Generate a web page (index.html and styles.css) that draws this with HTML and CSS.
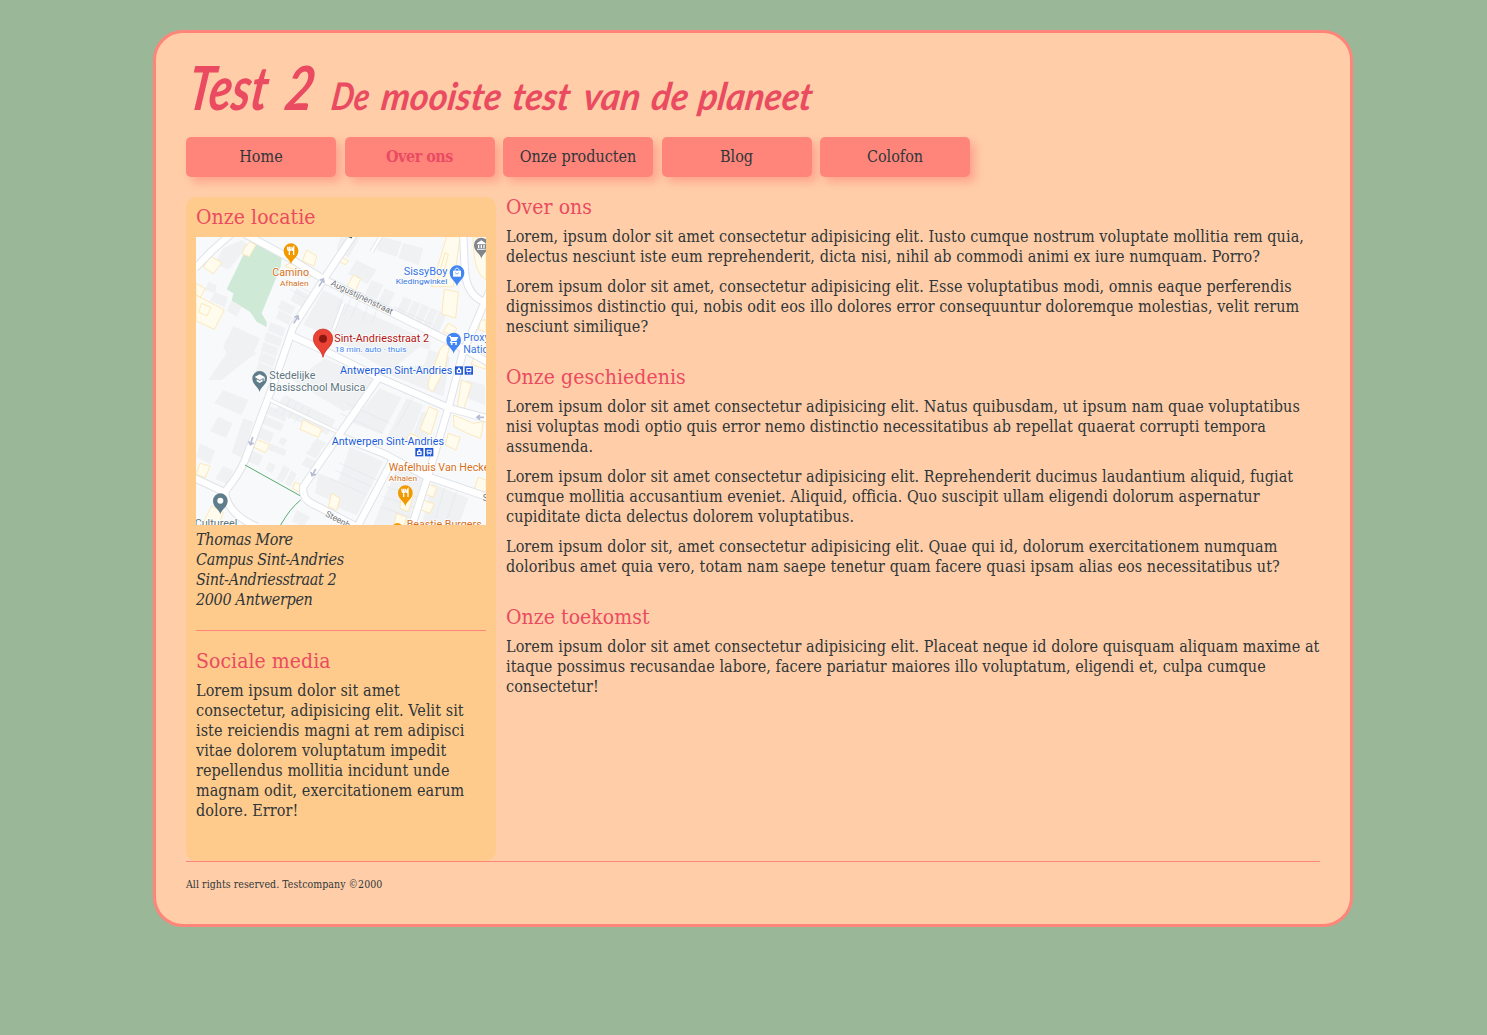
FILE: index.html
```
<!DOCTYPE html>
<html lang="nl">
<head>
<meta charset="utf-8">
<title>Test 2 - Over ons</title>
<link rel="stylesheet" href="styles.css">
</head>
<body>
<div class="page">
  <header>
    <svg class="brand" viewBox="0 0 640 74" role="img" aria-label="Test 2 De mooiste test van de planeet">
      <g transform="translate(0 50) skewX(-8)">
        <text class="brand-name"><tspan x="0" textLength="80" lengthAdjust="spacingAndGlyphs">Test</tspan></text>
        <text class="brand-name"><tspan x="97" textLength="29" lengthAdjust="spacingAndGlyphs">2</tspan></text>
        <text class="brand-sub" x="144" textLength="38" lengthAdjust="spacingAndGlyphs">De</text>
        <text class="brand-sub" x="194" textLength="120" lengthAdjust="spacingAndGlyphs">mooiste</text>
        <text class="brand-sub" x="325" textLength="58" lengthAdjust="spacingAndGlyphs">test</text>
        <text class="brand-sub" x="396" textLength="57" lengthAdjust="spacingAndGlyphs">van</text>
        <text class="brand-sub" x="464" textLength="37" lengthAdjust="spacingAndGlyphs">de</text>
        <text class="brand-sub" x="511" textLength="114" lengthAdjust="spacingAndGlyphs">planeet</text>
      </g>
    </svg>
    <nav class="menu">
      <a>Home</a><a class="active">Over ons</a><a>Onze producten</a><a>Blog</a><a>Colofon</a>
    </nav>
  </header>
  <div class="columns">
    <aside>
      <h2>Onze locatie</h2>
      <svg class="map" viewBox="18 21 870 864">
        <rect x="18" y="21" width="870" height="864" fill="#f8f9fb"/>
        <path class="park" d="M190 38L275 85L272 110L215 250L230 275V292L200 275L180 245L125 212L130 190L110 178L160 75Z"/>
        <g class="block">
          <path d="M75 100l25-45l55-25l20 15l-60 75zM55 155l25 10l-5 25l-30-10zM75 187l38 15l-8 30l-45-20zM125 212l30 18l-15 30l-30-18z"/>
          <path d="M130 288l80 38l-20 45l-80-40zM110 325l90 45l-30 20l-75 60h-40l55-80l-10-20z"/>
          <path d="M275 210l40 22l-12 24l-40-22zM268 240l38 20l-10 25l-38-20zM240 276l45 18l-6 26l-45-18zM228 306l48 18l-6 26l-48-18zM220 336l45 18l-8 26l-45-18zM213 366l45 18l-8 26l-45-18zM205 396l45 18l-8 30l-45-18z"/>
          <path d="M320 175l45 25l-22 34l-42-22zM400 180l60 30l-30 110l-90-35zM440 60l10-38h60l-35 60zM500 90l60 30l-28 42l-58-30zM575 20l60 15l-15 45l-60-20zM640 40l60 15l-15 50l-60-20z"/>
          <path d="M545 150l35 15l-20 42l-35-15zM585 175l30 13l-20 40l-30-13zM640 200l26 10l-25 55l-26-10zM670 212l22 9l-25 56l-22-9zM696 222l22 9l-25 56l-22-9zM722 233l22 9l-25 56l-22-9zM748 243l22 9l-25 56l-22-9z"/>
          <path d="M470 220l255 115l-22 70l-120 10l-160-90zM405 385l150 68l-35 80l-60 10l-150-90zM590 430l170 70l20-120l-90-30z"/>
          <path d="M100 480l75 30l-20 45l-82-35zM85 560l43 20l-20 44l-48-20zM160 565l30 10l-35 108l-30-15zM30 640l45 22l-15 40l-42-22zM100 708l30 15l-20 38l-35-15z"/>
          <path d="M232 525l60 28l-8 22l-60-26zM222 556l60 26l-10 22l-58-24zM212 592l40 18l-12 28l-38-14zM275 620l18 10l-12 18l-16-10zM240 640l50 20l-6 18l-50-18zM185 660l34 18l-14 30l-30-14zM237 696l20 10l-12 24l-18-10zM280 706l20 10l-22 42l-18-10zM304 722l16 10l-18 38l-18-10z"/>
          <path d="M260 545l26-50l150 75l-24 45zM380 625l30 15l-20 22l-28-14zM365 650l28 14l-16 22l-30-16zM350 680l28 14l-16 24l-28-14zM320 840l40 20l-20 30l-35-15zM385 730l75 30l-20 60l-65-30z"/>
          <path d="M570 475l65 28l-60 110l-90-35zM650 505l50 20l-50 120l-60-22zM740 555l-35 85l-40-15l30-80zM480 650l100 45l-80 160l-80-30zM620 715l80 30l-50 140h-100zM725 760l110 45l-30 80h-110zM820 500l65 25v-60l-55-15z"/>
        </g>
        <g class="seams">
          <path d="M310 160l50 28M300 178l45 24M475 165l-35 75M495 180l-35 75M518 188l-35 75M545 200l-30 75M570 210l-24 70M610 230l120 55"/>
          <path d="M280 500l-25 50M300 508l-25 50M320 518l-25 50M340 528l-25 50M360 538l-25 50M470 520l130 60M450 550l130 60M620 590l50-90M450 700l110 50M435 720l110 50M420 745l110 50M590 770l100 35M580 800l100 35M570 830l100 35M765 770l-35 115M800 785l-35 100"/>
        </g>
        <g class="shop">
          <path d="M60 78l35 20l-25 33l-30-20zM180 35l18 10l-20 35l-22-8l7-18zM18 195l85 45l-30 58l-55-26zM35 220l28 12l-12 26l-25-12zM18 160l28 16l-15 25l-13-6zM310 95l70 35l-20 12l-75-35zM350 60l30 18l-8 30l-35-15z"/>
          <path d="M770 20h40l-20 150h-65zM765 68l10 5l-20 80l-12-5zM763 178l42 8l-8 78l-42-12zM775 280l25 14l-8 25l-32-14zM750 360q12-25 28-10l-15 70l-35 65q-25-10-5-50zM850 20q15 0 38 20v110q-35-20-38-100zM870 270h18v35l-22-6z"/>
          <path d="M490 135l22 12l-16 35l-25-12zM450 80l25 12l-8 12l-17-8zM340 570l55 28l-10 24l-55-24zM200 628l38 16l-12 24l-35-16zM315 756l22 10l-8 20l-22-10zM30 700l30 8l-14 35l-28-10zM65 828l35 20l-15 38h-50zM425 790l25 15l-10 35l-25-10z"/>
          <path d="M850 385l38 15v18l-45-15zM815 450l30 12l-25 78l-18-10zM790 555l60 25l30-5l-8 50l-40-15l-40-20zM775 610l35 12l-12 38l-32-15zM717 530l27 12l-22 72l-32-16zM660 610l25 10l-8 20l-28-12zM708 760l32 12l-10 30l-30-12zM700 810l32 12l-12 28l-30-12zM635 780l35 15l-15 50l-25-10zM620 850l30 12l-8 24h-30zM865 742l23 8v40l-35-12z"/>
        </g>
        <g class="roads-edge">
          <path d="M15 115L65 63L125 10M165 12L300 85L405 150L610 250L790 340L900 400M490 15L400 150L310 290L255 450L165 690Q150 730 105 785Q110 850 200 890M300 315L420 370L560 440L780 535L890 565"/>
          <path d="M820 20L824 110Q825 190 880 215M900 180L818 370L775 535L715 735L665 890M565 445L450 610L340 770Q335 805 365 820L500 890M450 620L580 670L700 735L890 800M605 695L505 885M15 745L105 787"/>
        </g>
        <g class="roads">
          <path d="M15 115L65 63L125 10M165 12L300 85L405 150L610 250L790 340L900 400M490 15L400 150L310 290L255 450L165 690Q150 730 105 785Q110 850 200 890M300 315L420 370L560 440L780 535L890 565"/>
          <path d="M820 20L824 110Q825 190 880 215M900 180L818 370L775 535L715 735L665 890M565 445L450 610L340 770Q335 805 365 820L500 890M450 620L580 670L700 735L890 800M605 695L505 885M15 745L105 787"/>
        </g>
        <path class="lane-edge" d="M240 510L440 605M572 20L545 65M460 220L430 300"/>
        <path class="lane" d="M240 510L440 605M572 20L545 65M460 220L430 300"/>
        <path class="trail" d="M165 705L330 797M332 810Q300 835 272 885"/>
        <g class="arrows">
          <path d="M387 169L399 150M389 151L400 147L402 159M311 280L323 261M313 262L324 258L326 270M188 621L182 642M176 634L181 644L191 639M377 717L367 736M363 726L366 737L378 733M882 562H862M870 555L861 562L870 569"/>
        </g>
        <g>
          <g transform="translate(303 62)"><path fill="#f29900" d="M0 41C-3 25-22 20-22 0A22 22 0 1 1 22 0C22 20 3 25 0 41Z"/><path class="glyph" d="M-10-12V-5Q-10 0-5 0Q0 0 0-5V-12M-5-12V13M8 13V-12Q4-9 4-1H8"/></g>
          <g transform="translate(646 788)"><path fill="#f29900" d="M0 41C-3 25-22 20-22 0A22 22 0 1 1 22 0C22 20 3 25 0 41Z"/><path class="glyph" d="M-10-12V-5Q-10 0-5 0Q0 0 0-5V-12M-5-12V13M8 13V-12Q4-9 4-1H8"/></g>
          <g transform="translate(801 128)"><path fill="#4285f4" d="M0 41C-3 25-22 20-22 0A22 22 0 1 1 22 0C22 20 3 25 0 41Z"/><path fill="#fff" d="M-12-6H12V12H-12Z"/><path fill="none" stroke="#fff" stroke-width="3" d="M-6-6C-6-16 6-16 6-6"/><path fill="none" stroke="#4285f4" stroke-width="2" d="M-6 0Q0 8 6 0"/></g>
          <g transform="translate(791 330)"><path fill="#4285f4" d="M0 41C-3 25-22 20-22 0A22 22 0 1 1 22 0C22 20 3 25 0 41Z"/><path fill="#fff" d="M-15-13H-9L-7-9H14L8 3H-5L-7 6H10V9H-12L-8 1L-12-10H-15Z"/><circle cx="-6" cy="12" r="3" fill="#fff"/><circle cx="7" cy="12" r="3" fill="#fff"/></g>
          <g transform="translate(874 45)"><path fill="#80868b" d="M0 41C-3 25-22 20-22 0A22 22 0 1 1 22 0C22 20 3 25 0 41Z"/><path fill="#fff" d="M-13-5L0-14L13-5V-2H-13ZM-10 0H-6V9H-10ZM-2 0H2V9H-2ZM6 0H10V9H6ZM-13 11H13V14H-13Z"/></g>
          <g transform="translate(209 445)"><path fill="#607d8b" d="M0 41C-3 25-22 20-22 0A22 22 0 1 1 22 0C22 20 3 25 0 41Z"/><path fill="#fff" d="M-15-4L0-12L15-4V7H12V-1L0 5ZM-9 3L0 8L9 3V9L0 14L-9 9Z"/></g>
          <g transform="translate(91 812)"><path fill="#607d8b" d="M0 41C-3 25-22 20-22 0A22 22 0 1 1 22 0C22 20 3 25 0 41Z"/><circle r="9" fill="#fff"/></g>
          <path fill="#ea4335" stroke="#c5221f" stroke-width="2" d="M399 382C395 358 370 350 370 326A29 29 0 1 1 428 326C428 350 403 358 399 382Z"/><circle cx="399" cy="326" r="12" fill="#8c1711"/>
        </g>
        <g class="transit">
          <rect x="795" y="409" width="24" height="25"/><rect x="824" y="409" width="25" height="25"/><rect x="676" y="654" width="24" height="25"/><rect x="705" y="654" width="25" height="25"/>
          <path fill="#fff" d="M804 413h6v5h4v12h-14v-12h4zM829 414h15v12h-15zM831 428h3v3h-3zM839 428h3v3h-3zM685 658h6v5h4v12h-14v-12h4zM710 659h15v12h-15zM712 673h3v3h-3zM720 673h3v3h-3z"/>
          <path d="M804 421h6v5h-6zM832 417h9v5h-9zM685 666h6v5h-6zM713 662h9v5h-9z"/>
        </g>
        <g class="labels">
          <g fill="#d5711c"><text x="247" y="138" font-size="31" textLength="110" lengthAdjust="spacingAndGlyphs">Camino</text><text x="270" y="168" font-size="24" textLength="86" lengthAdjust="spacingAndGlyphs">Afhalen</text><text x="596" y="723" font-size="31" textLength="302" lengthAdjust="spacingAndGlyphs">Wafelhuis Van Hecke</text><text x="596" y="752" font-size="24" textLength="85" lengthAdjust="spacingAndGlyphs">Afhalen</text><text x="650" y="894" font-size="31" textLength="225" lengthAdjust="spacingAndGlyphs">Beastie Burgers</text></g>
          <g fill="#3575e2"><text x="641" y="134" font-size="31" textLength="131" lengthAdjust="spacingAndGlyphs">SissyBoy</text><text x="617" y="163" font-size="24" textLength="155" lengthAdjust="spacingAndGlyphs">Kledingwinkel</text><text x="820" y="332" font-size="31" textLength="78" lengthAdjust="spacingAndGlyphs">Proxy</text><text x="820" y="368" font-size="31" textLength="76" lengthAdjust="spacingAndGlyphs">Natio</text></g>
          <text x="433" y="336" font-size="32" fill="#b31412" textLength="284" lengthAdjust="spacingAndGlyphs">Sint-Andriesstraat 2</text><text x="434" y="366" font-size="24" fill="#4285f4" textLength="215" lengthAdjust="spacingAndGlyphs">18 min. auto · thuis</text>
          <g fill="#1a5cd7"><text x="450" y="431" font-size="31" textLength="337" lengthAdjust="spacingAndGlyphs">Antwerpen Sint-Andries</text><text x="425" y="644" font-size="31" textLength="337" lengthAdjust="spacingAndGlyphs">Antwerpen Sint-Andries</text></g>
          <g fill="#607681"><text x="238" y="447" font-size="31" textLength="138" lengthAdjust="spacingAndGlyphs">Stedelijke</text><text x="238" y="483" font-size="31" textLength="288" lengthAdjust="spacingAndGlyphs">Basisschool Musica</text><text x="14" y="890" font-size="31" textLength="128" lengthAdjust="spacingAndGlyphs">Cultureel</text></g>
          <g fill="#717579" font-size="26"><text transform="translate(421 165) rotate(26)" textLength="203" lengthAdjust="spacingAndGlyphs">Augustijnenstraat</text><text transform="translate(404 857) rotate(28)">Steenb</text><text x="878" y="812">S</text></g>
          <path stroke="#555" stroke-width="4" d="M472 18l14 6"/>
          <path fill="#f29900" d="M610 885q12-12 25 0z"/>
        </g>
      </svg>
      <address>Thomas More<br>Campus Sint-Andries<br>Sint-Andriesstraat 2<br>2000 Antwerpen</address>
      <section class="social">
        <h2>Sociale media</h2>
        <p>Lorem ipsum dolor sit amet<br>consectetur, adipisicing elit. Velit sit<br>iste reiciendis magni at rem adipisci<br>vitae dolorem voluptatum impedit<br>repellendus mollitia incidunt unde<br>magnam odit, exercitationem earum<br>dolore. Error!</p>
      </section>
    </aside>
    <main>
      <section>
        <h2>Over ons</h2>
        <p>Lorem, ipsum dolor sit amet consectetur adipisicing elit. Iusto cumque nostrum voluptate mollitia rem quia,<br>delectus nesciunt iste eum reprehenderit, dicta nisi, nihil ab commodi animi ex iure numquam. Porro?</p>
        <p>Lorem ipsum dolor sit amet, consectetur adipisicing elit. Esse voluptatibus modi, omnis eaque perferendis<br>dignissimos distinctio qui, nobis odit eos illo dolores error consequuntur doloremque molestias, velit rerum<br>nesciunt similique?</p>
      </section>
      <section>
        <h2>Onze geschiedenis</h2>
        <p>Lorem ipsum dolor sit amet consectetur adipisicing elit. Natus quibusdam, ut ipsum nam quae voluptatibus<br>nisi voluptas modi optio quis error nemo distinctio necessitatibus ab repellat quaerat corrupti tempora<br>assumenda.</p>
        <p>Lorem ipsum dolor sit amet consectetur adipisicing elit. Reprehenderit ducimus laudantium aliquid, fugiat<br>cumque mollitia accusantium eveniet. Aliquid, officia. Quo suscipit ullam eligendi dolorum aspernatur<br>cupiditate dicta delectus dolorem voluptatibus.</p>
        <p>Lorem ipsum dolor sit, amet consectetur adipisicing elit. Quae qui id, dolorum exercitationem numquam<br>doloribus amet quia vero, totam nam saepe tenetur quam facere quasi ipsam alias eos necessitatibus ut?</p>
      </section>
      <section>
        <h2>Onze toekomst</h2>
        <p>Lorem ipsum dolor sit amet consectetur adipisicing elit. Placeat neque id dolore quisquam aliquam maxime at<br>itaque possimus recusandae labore, facere pariatur maiores illo voluptatum, eligendi et, culpa cumque<br>consectetur!</p>
      </section>
    </main>
  </div>
  <footer>All rights reserved. Testcompany ©2000</footer>
</div>
</body>
</html>
```
FILE: styles.css
```
* { box-sizing: border-box; }
body {
  margin: 0;
  padding-top: 30px;
  background: #9ab898;
  color: #2f3639;
  font: 16px/20px "DejaVu Serif Condensed", "DejaVu Serif", serif;
  font-stretch: condensed;
}
.page {
  width: 1200px;
  height: 897px;
  margin-left: 153px;
  padding: 27px 30px 0;
  border: 3px solid #ff857b;
  border-radius: 30px;
  background: #ffcea8;
}
.brand { display: block; width: 640px; height: 74px; overflow: visible; }
.brand text { font-family: Lato, sans-serif; font-style: italic; font-weight: 700; fill: #ea4b61; }
.brand-name { font-size: 61px; }
.brand-sub { font-size: 38px; }
.menu { display: flex; gap: 8.5px; margin-top: 3px; }
.menu a {
  width: 150px;
  height: 40px;
  line-height: 39px;
  text-align: center;
  white-space: nowrap;
  border-radius: 5px;
  background: #ff857b;
  box-shadow: 5px 5px 10px rgba(255, 133, 123, .6);
}
.menu .active { color: #ea4b61; font-weight: 700; letter-spacing: -0.5px; }
.columns { display: flex; height: 664px; margin-top: 20px; }
aside {
  flex: 0 0 310px;
  padding: 10px;
  border-radius: 10px;
  background: #ffcb8c;
  letter-spacing: 0.07px;
}
main { flex: 1; padding-left: 10px; letter-spacing: 0.07px; white-space: nowrap; }
h2 { margin: 0 0 10px; font-size: 21px; line-height: 20px; font-weight: 400; color: #ea4b61; letter-spacing: 0.05px; }
p { margin: 0 0 10px; }
main section { margin-bottom: 30px; }
.map { display: block; width: 290px; height: 288px; overflow: hidden; }
address { margin-top: 5px; letter-spacing: -0.35px; }
.social { margin-top: 20px; padding-top: 20px; border-top: 1px solid #ff857b; white-space: nowrap; }
footer { padding-top: 12px; border-top: 1px solid #ff857b; font-size: 10.5px; letter-spacing: 0.05px; }

.park { fill: #ceead6; }
.block { fill: #eff1f3; }
.seams { fill: none; stroke: #e4e7ea; stroke-width: 2; }
.shop { fill: #fffbed; stroke: #fbe5b0; stroke-width: 2.5; }
.roads, .roads-edge { fill: none; stroke-linejoin: round; }
.roads-edge { stroke: #dfe3e8; stroke-width: 25; }
.roads { stroke: #fff; stroke-width: 19; }
.lane-edge { fill: none; stroke: #e2e5e9; stroke-width: 13; }
.lane { fill: none; stroke: #fff; stroke-width: 8; }
.trail { fill: none; stroke: #58ad70; stroke-width: 3; }
.arrows { fill: none; stroke: #b7bcd3; stroke-width: 5; }
.glyph { fill: none; stroke: #fff; stroke-width: 4; }
.transit { fill: #2158d6; }
.labels { font-family: Roboto, sans-serif; font-stretch: normal; letter-spacing: 0; }
.labels text { paint-order: stroke; stroke: #fff; stroke-width: 4px; stroke-linejoin: round; }
```
